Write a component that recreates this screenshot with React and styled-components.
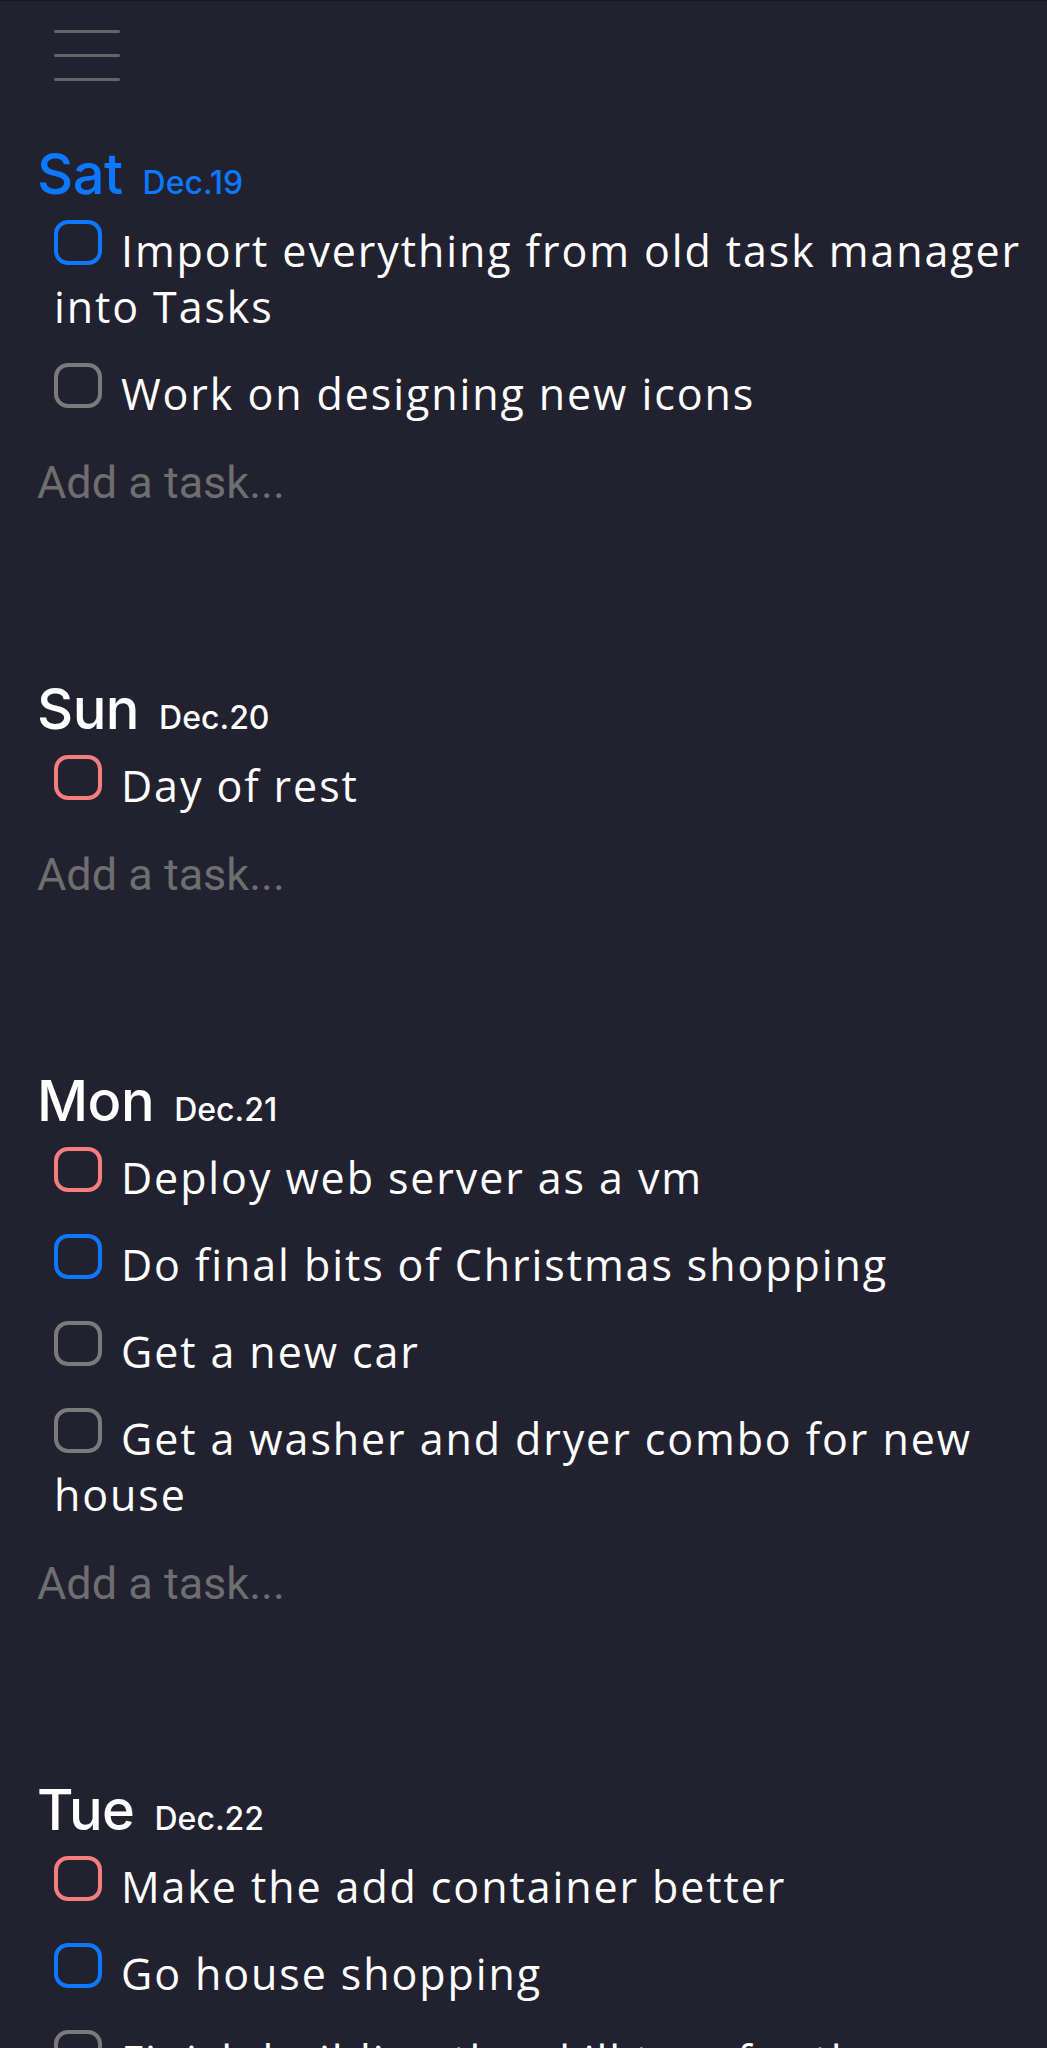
import React from 'react';
import styled, { createGlobalStyle } from 'styled-components';

const GlobalStyle = createGlobalStyle`
  html, body {
    margin: 0;
    padding: 0;
    background: #212130;
  }
  * { box-sizing: border-box; }
`;

const colors = {
  blue: '#0b78ff',
  red: '#f47d7d',
  gray: '#7a7a7a',
};

const Page = styled.div`
  min-height: 100vh;
  background: #212130;
  padding: 0 4px 40px 37px;
  border-top: 1px solid #17171f;
`;

const Menu = styled.button`
  display: flex;
  flex-direction: column;
  gap: 21px;
  width: 66px;
  margin: 29px 0 0 17px;
  padding: 0;
  background: none;
  border: none;
  cursor: pointer;

  span {
    display: block;
    height: 3px;
    width: 100%;
    border-radius: 2px;
    background: #656565;
  }
`;

const Day = styled.section`
  margin-top: ${(p) => (p.first ? '61px' : '0')};
  margin-bottom: 166px;
`;

const DayHeader = styled.h2`
  display: flex;
  align-items: baseline;
  gap: 20px;
  margin: 0;
  font-family: Inter, 'Noto Sans', sans-serif;
  font-weight: 500;
  line-height: 64px;
  color: ${(p) => (p.today ? colors.blue : '#ffffff')};
`;

const Weekday = styled.span`
  font-size: 56px;
  letter-spacing: -0.5px;
`;

const DateLabel = styled.span`
  font-size: 32px;
`;

const TaskList = styled.ul`
  list-style: none;
  margin: 8px 0 0;
  padding: 0 0 0 17px;
  display: flex;
  flex-direction: column;
  gap: 31px;
`;

const Task = styled.li`
  font-family: 'Open Sans', 'Noto Sans', sans-serif;
  font-size: 43px;
  line-height: 56px;
  letter-spacing: 1.9px;
  color: #ffffff;
`;

const Check = styled.span`
  display: inline-block;
  vertical-align: 2px;
  width: 48px;
  height: 45px;
  margin-top: -15px;
  margin-right: 19px;
  border: 4px solid ${(p) => colors[p.tone]};
  border-radius: 14px;
`;

const AddTask = styled.div`
  margin-top: 33px;
  font-family: Roboto, 'Liberation Sans', sans-serif;
  font-size: 45px;
  line-height: 56px;
  color: #6e6e6e;
`;

const days = [
  {
    weekday: 'Sat',
    date: 'Dec.19',
    today: true,
    tasks: [
      { text: 'Import everything from old task manager into Tasks', tone: 'blue' },
      { text: 'Work on designing new icons', tone: 'gray' },
    ],
  },
  {
    weekday: 'Sun',
    date: 'Dec.20',
    tasks: [{ text: 'Day of rest', tone: 'red' }],
  },
  {
    weekday: 'Mon',
    date: 'Dec.21',
    tasks: [
      { text: 'Deploy web server as a vm', tone: 'red' },
      { text: 'Do final bits of Christmas shopping', tone: 'blue' },
      { text: 'Get a new car', tone: 'gray' },
      { text: 'Get a washer and dryer combo for new house', tone: 'gray' },
    ],
  },
  {
    weekday: 'Tue',
    date: 'Dec.22',
    tasks: [
      { text: 'Make the add container better', tone: 'red' },
      { text: 'Go house shopping', tone: 'blue' },
      { text: 'Finish building the skill tree for the new planner', tone: 'gray' },
    ],
  },
];

function App() {
  return (
    <>
      <GlobalStyle />
      <Page>
        <Menu aria-label="Menu">
          <span />
          <span />
          <span />
        </Menu>
        {days.map((day, i) => (
          <Day key={day.date} first={i === 0}>
            <DayHeader today={day.today}>
              <Weekday>{day.weekday}</Weekday>
              <DateLabel>{day.date}</DateLabel>
            </DayHeader>
            <TaskList>
              {day.tasks.map((task) => (
                <Task key={task.text}>
                  <Check tone={task.tone} />
                  {task.text}
                </Task>
              ))}
            </TaskList>
            <AddTask>Add a task...</AddTask>
          </Day>
        ))}
      </Page>
    </>
  );
}

export default App;
